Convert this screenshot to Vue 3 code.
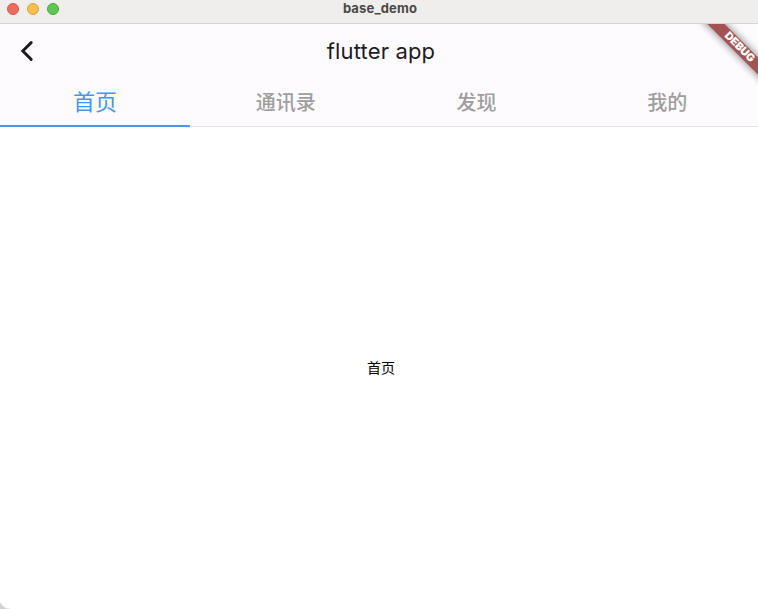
<script setup>
import { ref } from 'vue'

const tabs = ['首页', '通讯录', '发现', '我的']
const active = ref(0)
</script>

<template>
  <div class="window">
    <header class="titlebar">
      <div class="lights">
        <i class="light close"></i>
        <i class="light minimize"></i>
        <i class="light maximize"></i>
      </div>
      <span class="window-title">base_demo</span>
    </header>
    <div class="app">
      <div class="appbar">
        <svg class="back" width="16" height="24" viewBox="0 0 16 24" @click="active = 0">
          <path d="M11.2 3.6 2.8 12l8.4 8.4" />
        </svg>
        <h1 class="title">flutter app</h1>
      </div>
      <nav class="tabs">
        <div
          v-for="(tab, i) in tabs"
          :key="tab"
          class="tab"
          :class="{ active: i === active }"
          @click="active = i"
        >
          <span>{{ tab }}</span>
        </div>
      </nav>
      <main class="content">{{ tabs[active] }}</main>
    </div>
    <div class="banner-clip">
      <div class="banner">DEBUG</div>
    </div>
    <i class="corner"></i>
  </div>
</template>

<style>
body {
  overflow: hidden;
}
</style>

<style scoped>
.window {
  position: relative;
  display: flex;
  flex-direction: column;
  width: 758px;
  height: 609px;
  overflow: hidden;
  background: #fff;
  font-family: Inter, 'Noto Sans CJK SC', sans-serif;
}
.titlebar {
  box-sizing: border-box;
  display: grid;
  grid-template-columns: 90px 1fr 90px;
  width: 760px;
  height: 24px;
  flex: none;
  background: #efeeec;
  border-bottom: 1px solid #d5d4d3;
}
.lights {
  display: flex;
  gap: 8px;
  padding: 3px 0 0 7px;
}
.light {
  box-sizing: border-box;
  width: 12px;
  height: 12px;
  border-radius: 50%;
}
.close {
  background: #ed6a5e;
  border: 1px solid #d2574f;
}
.minimize {
  background: #f5bf4f;
  border: 1px solid #d9a23e;
}
.maximize {
  background: #61c554;
  border: 1px solid #4da73f;
}
.window-title {
  text-align: center;
  font-size: 13px;
  line-height: 17px;
  font-weight: 700;
  letter-spacing: 0.15px;
  color: #4a4948;
}
.app {
  display: flex;
  flex-direction: column;
  flex: 1;
  width: 762px;
}
.appbar {
  box-sizing: border-box;
  display: grid;
  grid-template-columns: 56px 1fr 56px;
  align-items: center;
  height: 55px;
  padding-bottom: 2px;
  background: #fefbff;
}
.back {
  margin-left: 20px;
}
.back path {
  fill: none;
  stroke: #1c1b1f;
  stroke-width: 2.9;
  stroke-linecap: round;
}
.title {
  margin: 0;
  text-align: center;
  font-size: 22px;
  font-weight: 400;
  line-height: 28px;
  letter-spacing: 0.15px;
  color: #1c1b1f;
}
.tabs {
  box-sizing: border-box;
  display: grid;
  grid-template-columns: 190px repeat(3, 1fr);
  height: 48px;
  background: #fefbff;
  box-shadow: inset 0 -1px #e4e1e8;
}
.tab {
  box-sizing: border-box;
  display: flex;
  align-items: center;
  justify-content: center;
  padding: 1px 0 0 1px;
  border-bottom: 2px solid transparent;
  font-size: 20px;
  line-height: 30px;
  font-weight: 500;
  color: #9e9e9e;
}
.tab.active {
  padding: 0;
  border-color: #4c98e8;
  font-size: 22px;
  font-weight: 400;
  color: #4297ed;
}
.content {
  display: flex;
  flex: 1;
  align-items: center;
  justify-content: center;
  font-size: 14px;
  line-height: 20px;
  color: #000;
}
.banner-clip {
  position: absolute;
  top: 24px;
  right: 0;
  width: 80px;
  height: 80px;
  overflow: hidden;
  pointer-events: none;
}
.banner {
  position: absolute;
  left: 10.5px;
  top: 16.5px;
  width: 100px;
  height: 12px;
  transform: rotate(45deg);
  background: #a45252;
  box-shadow: 0 0 9px rgba(0, 0, 0, 0.55);
  text-align: center;
  text-indent: 1px;
  font-size: 10.8px;
  line-height: 12px;
  font-weight: 900;
  color: #fff;
}
.corner {
  position: absolute;
  left: 0;
  bottom: 0;
  width: 10px;
  height: 7px;
  background: radial-gradient(circle at 10px -4px, transparent 10px, #d0d0d0 11.5px);
}
</style>
